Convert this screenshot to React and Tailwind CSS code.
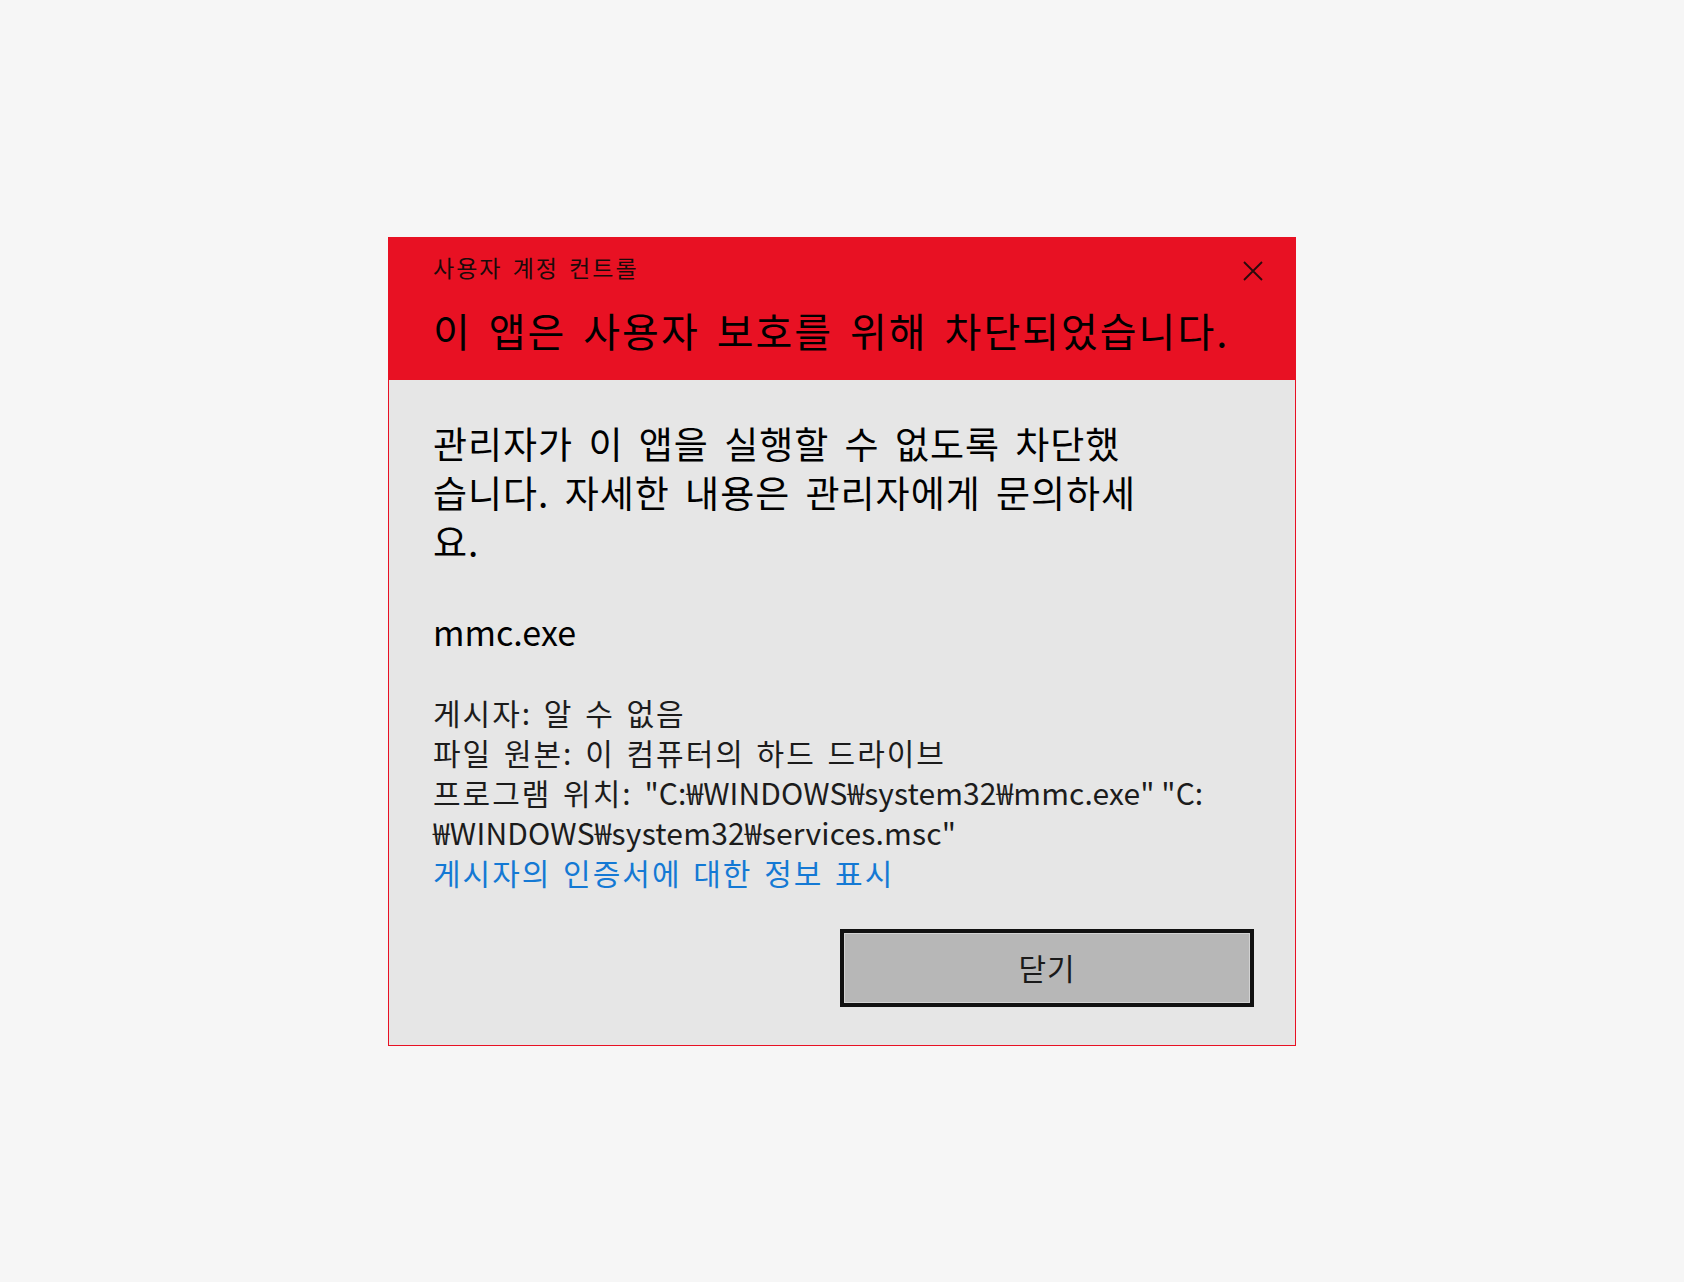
export default function App() {
  const font = { fontFamily: '"Noto Sans CJK KR", "Noto Sans", sans-serif' }
  return (
    <div
      className="flex h-[1282px] w-full items-center justify-center bg-[#f6f6f6] text-black"
      style={font}
    >
      <div className="flex w-[908px] flex-col">
        {/* header */}
        <div className="bg-[#e81123] pl-[45px] pr-[33px] pt-[15px] pb-[25px]">
          <div className="flex items-start justify-between">
            <div className="text-[23px] leading-[30px] tracking-[2px] [word-spacing:3px] text-[#1a0a0a]">
              사용자 계정 컨트롤
            </div>
            <button className="mt-[9px] flex h-5 w-5 items-center justify-center">
              <svg width="20" height="20" viewBox="0 0 20 20">
                <path d="M1 1 L19 19 M19 1 L1 19" stroke="#2a0a0c" strokeWidth="1.8" fill="none" />
              </svg>
            </button>
          </div>
          <div className="mt-[23px] whitespace-nowrap text-[40px] leading-[50px] tracking-[2px] [word-spacing:6px] text-black">
            이 앱은 사용자 보호를 위해 차단되었습니다.
          </div>
        </div>

        {/* body */}
        <div className="flex flex-col border-x border-b border-[#e81123] bg-[#e6e6e6] pl-[44px] pr-[41px] pt-[39px] pb-[38px]">
          <div className="whitespace-nowrap text-[37px] leading-[49px] tracking-[1px] [word-spacing:6px] text-black">
            관리자가 이 앱을 실행할 수 없도록 차단했
            <br />
            습니다. 자세한 내용은 관리자에게 문의하세
            <br />
            요.
          </div>
          <div className="mt-[41px] text-[34px] leading-[49px] text-black">mmc.exe</div>

          <div className="mt-[36px] whitespace-nowrap text-[30px] leading-[40px] tracking-[2px] [word-spacing:3px] text-[#1c1c1c]">
            <div>게시자: 알 수 없음</div>
            <div>파일 원본: 이 컴퓨터의 하드 드라이브</div>
            <div>
              프로그램 위치:{' '}
              <span className="tracking-[0.1px] [word-spacing:0px]">"C:₩WINDOWS₩system32₩mmc.exe" "C:</span>
            </div>
            <div className="tracking-[0.2px]">₩WINDOWS₩system32₩services.msc"</div>
            <a href="#" className="block text-[#1479d4]">게시자의 인증서에 대한 정보 표시</a>
          </div>

          <div className="mt-[37px] flex justify-end">
            <button className="flex h-[78px] w-[414px] items-center justify-center border-4 border-[#111] bg-[#b7b7b7] text-[30px] tracking-[1px] text-[#1a1a1a] shadow-[inset_0_0_0_1px_#d2d2d2]">
              닫기
            </button>
          </div>
        </div>
      </div>
    </div>
  )
}
